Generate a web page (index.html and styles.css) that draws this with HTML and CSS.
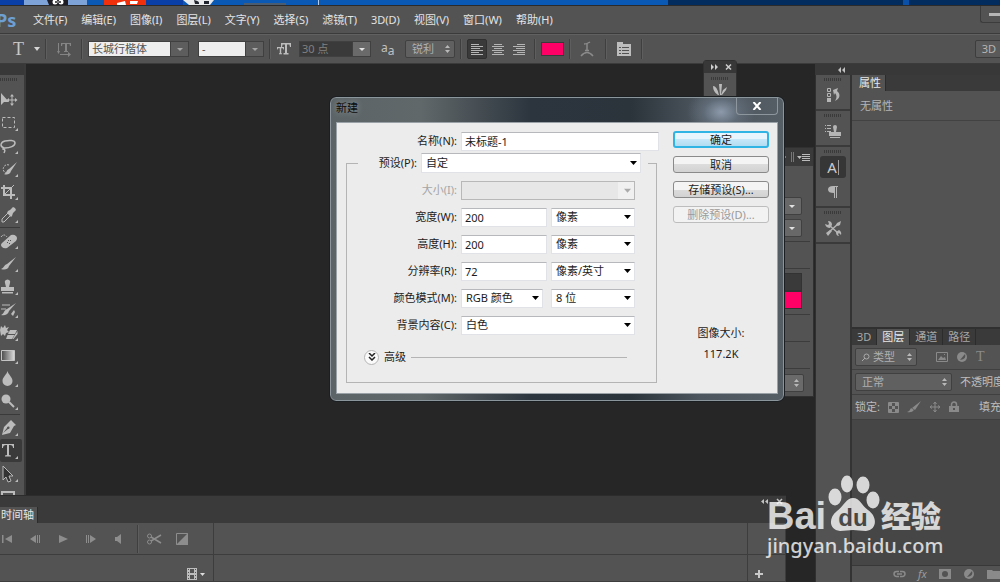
FILE: index.html
```html
<!DOCTYPE html>
<html lang="zh-CN">
<head>
  <meta charset="UTF-8">
  <meta name="viewport" content="width=device-width, initial-scale=1.0">
  <title>新建</title>
  <link rel="stylesheet" href="styles.css">
</head>
<body>
  <div class="app">
    <div class="desktop">
      <svg width="1000" height="5" viewBox="0 0 1000 5">
        <path fill="#0a3fa8" d="M0 0h24v5H0zM146 0h37v5h-37z"/>
        <path fill="#7da3d8" d="M24 0h63v5H24z"/>
        <path fill="#1d1c24" d="M47 0h21v5H49z"/>
        <circle cx="55" cy="2" r="2.500" fill="#fff"/>
        <circle cx="61" cy="2" r="2.500" fill="#fff"/>
        <circle cx="56" cy="2" r="1" fill="#222"/>
        <circle cx="60" cy="2" r="1" fill="#222"/>
        <path fill="#f0300c" d="M104 0h42v5h-42z"/>
        <path fill="#fff" d="M117 3l8-2 1 4h-9zM130 1h8l-1 3h-7z"/>
        <path fill="#e8eaec" d="M183 0h31l-4 5h-21z"/>
        <path fill="#20242c" d="M194 0q6 1 5 4h-4zM204 1h5v3h-5z"/>
        <path fill="#4b5b70" d="M244 3h42v2h-42z"/>
        <path fill="#b8cbe4" d="M318 0h1v5h-1z"/>
        <path fill="#032c5e" d="M668 0h332v5H668z"/>
        <path fill="#0b50a8" d="M903 0h6v5h-6z"/>
      </svg>
    </div>

    <header class="menubar">
      <span class="logo">Ps</span>
      <nav class="menus">
        <a href="#">文件(F)</a>
        <a href="#">编辑(E)</a>
        <a href="#">图像(I)</a>
        <a href="#">图层(L)</a>
        <a href="#">文字(Y)</a>
        <a href="#">选择(S)</a>
        <a href="#">滤镜(T)</a>
        <a href="#">3D(D)</a>
        <a href="#">视图(V)</a>
        <a href="#">窗口(W)</a>
        <a href="#">帮助(H)</a>
      </nav>
      <button class="minimize" aria-label="最小化"><span></span></button>
    </header>

    <div class="options">
      <button class="tool-preset" aria-label="文字工具">T</button>
      <svg class="caret" width="6" height="4" viewBox="0 0 6 4"><path d="M0 0h6L3 4z"/></svg>
      <span class="sep"></span>
      <svg class="orient" width="16" height="16" viewBox="0 0 16 16"><path d="M5 2h10v3h-1l-.5-2H11v7h1v1H8v-1h1V3H6.500L6 5H5zM2 2h1v8h1l-1.500 3L1 10h1zM4 13h8v-2l3 2.500L12 16v-2H4z"/></svg>
      <span class="sep"></span>
      <div class="combo font-name">
        <input type="text" value="长城行楷体" aria-label="字体">
        <button aria-label="选择字体"><i class="tri"></i></button>
      </div>
      <div class="combo font-style">
        <input type="text" value="-" aria-label="字形">
        <button aria-label="选择字形"><i class="tri"></i></button>
      </div>
      <span class="sep"></span>
      <svg class="size-icon" width="16" height="14" viewBox="0 0 16 14"><path d="M5 1h10v4h-1l-.6-2.500H11V11h1.500v1.500h-5V11H9V2.500H6.600L6 5H5zM1 5h7v2.500h-.7L7 6.200H5.200v5H6v1H3v-1h.8v-5H2L1.700 7.500H1z"/></svg>
      <div class="combo dark font-size">
        <input type="text" value="30 点" aria-label="字号">
        <button aria-label="选择字号"><i class="tri"></i></button>
      </div>
      <span class="aa">a<sub>a</sub></span>
      <select class="dark-select sharp" aria-label="消除锯齿"><option>锐利</option></select>
      <span class="sep"></span>
      <div class="aligns">
        <button class="active" aria-label="左对齐"><svg width="14" height="14" viewBox="0 0 14 14"><path d="M1 1h8v1H1zM1 3h12v1H1zM1 5h9v1H1zM1 7h12v1H1zM1 9h8v1H1zM1 11h12v1H1z"/></svg></button>
        <button aria-label="居中对齐"><svg width="14" height="14" viewBox="0 0 14 14"><path d="M3 1h8v1H3zM1 3h12v1H1zM3 5h8v1H3zM1 7h12v1H1zM3 9h8v1H3zM1 11h12v1H1z"/></svg></button>
        <button aria-label="右对齐"><svg width="14" height="14" viewBox="0 0 14 14"><path d="M5 1h8v1H5zM1 3h12v1H1zM4 5h9v1H4zM1 7h12v1H1zM5 9h8v1H5zM1 11h12v1H1z"/></svg></button>
      </div>
      <span class="sep"></span>
      <button class="swatch" aria-label="文本颜色"></button>
      <span class="sep"></span>
      <svg class="warp" width="14" height="16" viewBox="0 0 14 16"><path d="M4 3q3 0 6-2M7 2v7M5 9.500h4M1 15q6-7 12 0" fill="none" stroke="#8b8b8b" stroke-width="1.500"/></svg>
      <span class="sep"></span>
      <svg class="panel-icon" width="16" height="16" viewBox="0 0 16 16"><path fill-rule="evenodd" d="M1 1h6v2h8v12H1zM3 6v1h2V6zm3 0v1h7V6zM3 9v1h2V9zm3 0v1h7V9zm-3 3v1h2v-1zm3 0v1h7v-1z"/></svg>
      <span class="sep"></span>
      <button class="mode-3d">3D</button>
    </div>

    <div class="workspace">
      <main class="stage">
        <div class="canvas-row">
          <aside class="tools">
            <div class="tools-head"></div>
            <i class="grip"></i>
            <button aria-label="移动"><svg viewBox="0 0 22 23"><path d="M1 5v12l3-3h5z"/><path d="M12 8v8M8 12h8" class="line"/><path d="M12 6l2 2.500h-4zM12 18l2-2.500h-4zM6.500 12L9 10v4zM17.500 12L15 10v4z"/></svg></button>
            <button aria-label="选框"><svg viewBox="0 0 22 23"><path class="line" stroke-dasharray="3 2" d="M2.500 6.500h12v10h-12z"/><path d="M18 17v3h-3z"/></svg></button>
            <button aria-label="套索"><svg viewBox="0 0 22 23"><path class="line lasso" d="M4 14c-5-2-3-6 1-7s10-1 10 2-5 5-10 5q-2-1-2 1 3 0 1 4"/><path d="M18 17v3h-3z"/></svg></button>
            <button aria-label="快速选择"><svg viewBox="0 0 22 23"><path class="line" stroke-dasharray="2 1" d="M9 8a4 4 0 1 0-3 8"/><path d="M17 5l-6 9-2-2zM9 12l2 2c-1 4-5 4-7 3 3-1 2-4 5-5zM18 17v3h-3z"/></svg></button>
            <button aria-label="裁剪"><svg viewBox="0 0 22 23"><path class="line thick" d="M4 5v10h11M1 8h10v11"/><path class="line" d="M4 15L14 5"/><path d="M18 17v3h-3z"/></svg></button>
            <button aria-label="吸管"><svg viewBox="0 0 22 23"><path class="line" d="M9 9l-7 7v3h2l7-7"/><path d="M8 8l2-1 3-3 2 1 1 2-3 3-1 3-1 1-4-4zM18 17v3h-3z"/></svg></button>
            <hr>
            <button aria-label="修复画笔"><svg viewBox="0 0 22 23"><path class="line" stroke-dasharray="2 1" d="M1 8q3-4 6 0"/><path fill-rule="evenodd" d="M2 14l9-8q3-1 5 1t0 5l-9 7q-3 1-5-1t0-4zm5-1v1h1v-1zm3-2v1h1v-1zm-1 3v1h1v-1zm-1-3v1h1v-1zM18 17v3h-3z"/></svg></button>
            <button aria-label="画笔"><svg viewBox="0 0 22 23"><path d="M16 5l-7 9-2-2zM7 12l2 2c-1 4-5 4-8 3 3-1 3-4 6-5zM18 17v3h-3z"/></svg></button>
            <button aria-label="图章"><svg viewBox="0 0 22 23"><path d="M6 12l-1-4q-1-3 2.500-3.500Q11 5 10 8l-1 4h5v4H1v-4zM2 17h11v1.500H2zM18 17v3h-3z"/></svg></button>
            <button aria-label="历史画笔"><svg viewBox="0 0 22 23"><path class="line" d="M2 7h8M6 11H1"/><path d="M16 5l-7 8-2-2zM7 11l2 2c-1 4-5 5-8 4 3-1 3-5 6-6zM11 16l3-4 1 2-2 4zM18 17v3h-3z"/></svg></button>
            <button aria-label="橡皮擦"><svg viewBox="0 0 22 23"><path d="M1 5l2 2 2-3 1 3 3-1-2 3 2 2-3 1-1 3-2-2-2 2-1-6zM10 9h7l-2 4H8zM7.500 14h7L12 18H6zM15.500 13l2-3v3l-4 5h-1z"/><path d="M18 17v3h-3z"/></svg></button>
            <button aria-label="渐变"><svg viewBox="0 0 22 23"><defs><linearGradient id="grad"><stop stop-color="#4a4a4a"/><stop offset="1" stop-color="#ddd"/></linearGradient></defs><path fill="url(#grad)" stroke="#c4c4c4" d="M1.500 6.500h13v10h-13z"/><path d="M18 17v3h-3z"/></svg></button>
            <button aria-label="模糊"><svg viewBox="0 0 22 23"><path d="M7.500 4c1 4 5 6 5 10a5 5 0 0 1-10 0c0-4 4-6 5-10zM18 17v3h-3z"/></svg></button>
            <button aria-label="减淡"><svg viewBox="0 0 22 23"><circle cx="6" cy="9" r="4.500"/><path class="line thick" d="M9 12l5 5"/><path d="M18 17v3h-3z"/></svg></button>
            <hr>
            <button aria-label="钢笔"><svg viewBox="0 0 22 23"><path fill-rule="evenodd" d="M11 4l5 5-2 1-4 7-8 2 2-8 5-5zM3 17l5-4a1.300 1.300 0 1 0-1-1zM18 17v3h-3z"/></svg></button>
            <button class="active" aria-label="文字"><svg viewBox="0 0 22 23"><path d="M2 5h12v4h-1q0-3-3-3H9v10l2 .5v1H5v-1l2-.5V6H6Q3 6 3 9H2zM18 17v3h-3z"/></svg></button>
            <button aria-label="路径选择"><svg viewBox="0 0 22 23"><path d="M3 4v14l3-3 2 5 3-1-2-5h4z" fill="#333" stroke="#b8b8b8"/><path d="M18 17v3h-3z"/></svg></button>
            <button aria-label="矩形"><svg viewBox="0 0 22 23"><path class="line thick" d="M2 7h12v9H2z"/></svg></button>
          </aside>
        </div>

        <section class="timeline">
          <div class="timeline-head">
            <svg width="24" height="7" viewBox="0 0 24 7"><path fill="#c2c2c2" d="M4 1v5L1 3.500zM8 1v5L5 3.500z"/><path stroke="#c2c2c2" stroke-width="1.500" d="M17 1l5 5M22 1l-5 5"/></svg>
          </div>
          <div class="tabs"><button class="tab active">时间轴</button></div>
          <div class="timeline-grid">
            <div class="controls">
              <button aria-label="转到第一帧"><svg width="12" height="10" viewBox="0 0 12 10"><path d="M1 1h1.500v8H1zM11 1v8L4 5z"/></svg></button>
              <button aria-label="上一帧"><svg width="12" height="10" viewBox="0 0 12 10"><path d="M7 1v8L1 5zM8 1h1v8H8zM10 1h1v8h-1z"/></svg></button>
              <button aria-label="播放"><svg width="12" height="10" viewBox="0 0 12 10"><path d="M2 1l9 4-9 4z"/></svg></button>
              <button aria-label="下一帧"><svg width="12" height="10" viewBox="0 0 12 10"><path d="M1 1h1v8H1zM3 1h1v8H3zM5 1l6 4-6 4z"/></svg></button>
              <button aria-label="音频"><svg width="12" height="10" viewBox="0 0 12 10"><path d="M2 3h2l4-3v10L4 7H2z"/></svg></button>
              <span class="sep"></span>
              <button aria-label="拆分"><svg width="16" height="12" viewBox="0 0 16 12"><path fill="none" stroke="#8d8d8d" stroke-width="1.500" d="M5 4l10 6M5 8l10-6"/><circle cx="3.500" cy="3" r="2" fill="none" stroke="#8d8d8d"/><circle cx="3.500" cy="9" r="2" fill="none" stroke="#8d8d8d"/></svg></button>
              <button class="fade" aria-label="过渡"><svg width="12" height="12" viewBox="0 0 12 12"><path fill="none" stroke="#8d8d8d" d="M.5.500h11v11H.5z"/><path d="M12 0v12H0z"/></svg></button>
            </div>
            <div></div>
            <div></div>
            <div class="film">
              <svg width="18" height="12" viewBox="0 0 18 12"><path fill="#bdbdbd" fill-rule="evenodd" d="M0 0h10v12H0zM1 1v1h1V1zm0 3v1h1V4zm0 3v1h1V7zm0 3v1h1v-1zM8 1v1h1V1zm0 3v1h1V4zm0 3v1h1V7zm0 3v1h1v-1zM3 1v4h4V1zm0 6v4h4V7z"/><path fill="#ddd" d="M13 5h5l-2.500 3z"/></svg>
            </div>
            <div></div>
            <div class="add"><button aria-label="添加"><svg width="10" height="10" viewBox="0 0 10 10"><path fill="#c8c8c8" d="M4 1h2v3h3v2H6v3H4V6H1V4h3z"/></svg></button></div>
          </div>
        </section>

        <div class="brush-panel">
          <div class="brush-head"><svg width="22" height="8" viewBox="0 0 22 8"><path fill="#ccc" d="M1 1v6l3-3zM5 1v6l3-3z"/><path stroke="#ccc" stroke-width="1.500" d="M16 1.500l5 5M21 1.500l-5 5"/></svg></div>
          <i class="grip"></i>
          <svg width="18" height="16" viewBox="0 0 18 16"><path fill="#bbb" d="M2 3q4 0 6 9H7Q2 9 2 3zM8 1h3l-1 11H9zM16 4l-1 3-4 5h-1l2-5z"/></svg>
        </div>

        <section class="char-panel">
          <div class="char-head"><svg width="28" height="12" viewBox="0 0 28 12"><path fill="#bbb" d="M0 3l3 3-3 3z"/><path stroke="#777" d="M8.500 1v10M10.500 1v10"/><path fill="#bbb" d="M14 5h5l-2.500 3zM19 3h8v1h-8zM19 5h8v1h-8zM19 7h8v1h-8zM19 9h8v1h-8z"/></svg></div>
          <div class="char-group first">
            <button class="drop" aria-label="行距"><i class="tri"></i></button>
            <button class="drop" aria-label="字距"><i class="tri"></i></button>
          </div>
          <div class="char-group blank"></div>
          <div class="char-group colors"><span></span><span class="pink"></span></div>
          <div class="char-group small"></div>
          <div class="char-group small"></div>
          <div class="char-group last"><select class="dark-select" aria-label="语言"><option></option></select></div>
        </section>

        <section class="dialog" role="dialog" aria-labelledby="dialog-title">
          <div class="dialog-title">
            <h1 id="dialog-title">新建</h1>
            <button class="close" aria-label="关闭"><svg width="10" height="8" viewBox="0 0 10 8"><path stroke="#fff" stroke-width="2" d="M1.500 0l7 8M8.500 0l-7 8"/></svg></button>
          </div>
          <form class="dialog-body">
            <div class="fields">
              <div class="row name-row">
                <label for="name">名称(N):</label>
                <input id="name" type="text" value="未标题-1">
              </div>
              <fieldset>
                <legend>
                  <label for="preset">预设(P):</label>
                  <select id="preset"><option>自定</option></select>
                </legend>
                <div class="row">
                  <label for="size" class="disabled">大小(I):</label>
                  <select id="size" class="wide" disabled><option></option></select>
                </div>
                <div class="row">
                  <label for="width">宽度(W):</label>
                  <input id="width" type="text" value="200">
                  <select aria-label="宽度单位"><option>像素</option></select>
                </div>
                <div class="row">
                  <label for="height">高度(H):</label>
                  <input id="height" type="text" value="200">
                  <select aria-label="高度单位"><option>像素</option></select>
                </div>
                <div class="row">
                  <label for="res">分辨率(R):</label>
                  <input id="res" type="text" value="72">
                  <select aria-label="分辨率单位"><option>像素/英寸</option></select>
                </div>
                <div class="row">
                  <label for="mode">颜色模式(M):</label>
                  <select id="mode" class="mode"><option>RGB 颜色</option></select>
                  <select aria-label="位深度"><option>8 位</option></select>
                </div>
                <div class="row">
                  <label for="bg">背景内容(C):</label>
                  <select id="bg" class="wide"><option>白色</option></select>
                </div>
                <div class="advanced">
                  <button type="button" aria-label="展开高级"><svg width="8" height="8" viewBox="0 0 8 8"><path fill="none" stroke="#222" stroke-width="1.500" d="M1 0l3 3 3-3M1 4l3 3 3-3"/></svg></button>
                  <span>高级</span>
                  <i></i>
                </div>
              </fieldset>
            </div>
            <div class="actions">
              <button type="button" class="default">确定</button>
              <button type="button">取消</button>
              <button type="button">存储预设(S)...</button>
              <button type="button" disabled>删除预设(D)...</button>
              <p>图像大小:</p>
              <p>117.2K</p>
            </div>
          </form>
        </section>
      </main>

      <aside class="side">
        <div class="side-head"><svg width="8" height="6" viewBox="0 0 8 6"><path fill="#c2c2c2" d="M4 0v6L1 3zM8 0v6L5 3z"/></svg></div>
        <div class="side-body">
          <div class="dock">
            <div class="dock-group">
              <i class="grip"></i>
              <button aria-label="历史记录"><svg width="16" height="18" viewBox="0 0 16 18"><path fill="none" stroke="#b5b5b5" d="M2.500 2.500h3v3h-3zM2.500 7.500h3v3h-3z"/><path fill="#b5b5b5" d="M2 12h4v4H2zM8 4l5-2-1 3c4 3 3 8-2 10 2-3 2-6 0-8l-1 2z"/></svg></button>
            </div>
            <div class="dock-group">
              <i class="grip"></i>
              <button aria-label="仿制源"><svg width="18" height="16" viewBox="0 0 18 16"><path fill="#b5b5b5" d="M1 2h1v1H1zM3 2h4v1H3zM1 5h1v1H1zM3 5h4v1H3zM1 8h1v1H1zM3 8h4v1H3zM10 9L9 4q0-2 2-2t2 2l-1 5h5v4H5V9zM6 14h10v1H6z"/></svg></button>
            </div>
            <div class="dock-group tall">
              <i class="grip"></i>
              <button class="active" aria-label="字符"><span>A</span></button>
              <button aria-label="段落"><svg width="12" height="14" viewBox="0 0 12 14"><path fill="#b5b5b5" d="M11 1v1h-1v11H9V2H8v11H7V8Q1 8 1 4.500T6 1z"/></svg></button>
            </div>
            <div class="dock-group">
              <i class="grip"></i>
              <button aria-label="工具预设"><svg width="18" height="18" viewBox="0 0 18 18"><path fill="none" stroke="#b5b5b5" stroke-width="1.500" d="M5 6l9 8M14 5L5 13"/><path fill="#b5b5b5" d="M1 5l3 1 1-1-1-3q4 0 4 4L6 9Q2 9 1 5zM12 6l1-2 4-2-1 4-2 1zM2 14l4-3 2 1-4 5zM12 13l3-2q3 2 2 5l-2-2-1 1 1 2q-3 0-3-4z"/></svg></button>
            </div>
          </div>

          <div class="panels">
            <section class="props">
              <div class="tabs"><button class="tab active">属性</button></div>
              <p>无属性</p>
            </section>
            <section class="layers">
              <div class="tabs">
                <button class="tab">3D</button>
                <button class="tab active">图层</button>
                <button class="tab">通道</button>
                <button class="tab">路径</button>
              </div>
              <div class="layer-row filter">
                <select class="dark-select kind" aria-label="过滤类型"><option>类型</option></select>
                <svg width="12" height="12" viewBox="0 0 12 12"><path fill="none" stroke="#8a8a8a" d="M.5 1.500h11v9H.5z"/><path fill="#8a8a8a" d="M2 9l3-4 2 2 2-1 1 3zM8 3h1v1H8z"/></svg>
                <svg width="12" height="12" viewBox="0 0 12 12"><circle cx="6" cy="6" r="5" fill="#8a8a8a"/><path fill="#535353" d="M9 3q2 5-5 6z"/></svg>
                <span class="serif-t">T</span>
              </div>
              <div class="layer-row">
                <select class="dark-select blend" aria-label="混合模式"><option>正常</option></select>
                <span>不透明度:</span>
              </div>
              <div class="layer-row lock">
                <span>锁定:</span>
                <svg width="11" height="11" viewBox="0 0 11 11"><path fill="none" stroke="#8a8a8a" d="M.5.500h10v10H.5z"/><path fill="#8a8a8a" d="M1 1h3v3H1zM7 1h3v3H7zM4 4h3v3H4zM1 7h3v3H1zM7 7h3v3H7z"/></svg>
                <svg width="14" height="12" viewBox="0 0 14 12"><path fill="#8a8a8a" d="M14 0L8 9 5 7zM4 7l3 2q-2 3-7 2 3-1 4-4z"/></svg>
                <svg width="12" height="12" viewBox="0 0 12 12"><path fill="none" stroke="#8a8a8a" d="M6 1v10M1 6h10M4.500 3L6 1l1.500 2M4.500 9L6 11l1.500-2M3 4.500L1 6l2 1.500M9 4.500L11 6 9 7.500"/></svg>
                <svg width="10" height="12" viewBox="0 0 10 12"><path fill="none" stroke="#8a8a8a" stroke-width="1.500" d="M2.500 6V3.500a2.500 2.500 0 0 1 5 0V6"/><path fill="#8a8a8a" fill-rule="evenodd" d="M0 5h10v6H0zm4 2v2h2V7z"/></svg>
                <span class="fill-label">填充:</span>
              </div>
              <div class="layer-list"></div>
              <div class="layer-foot">
                <svg width="13" height="8" viewBox="0 0 13 8"><path fill="none" stroke="#8a8a8a" stroke-width="1.500" d="M6 1.500H3.500a2.500 2.500 0 0 0 0 5H6M7 1.500h2.500a2.500 2.500 0 0 1 0 5H7M4 4h5"/></svg>
                <em>fx</em>
                <svg width="12" height="10" viewBox="0 0 12 10"><path fill="#8a8a8a" fill-rule="evenodd" d="M0 0h12v10H0zm6 2a3 3 0 1 0 0 6 3 3 0 0 0 0-6z"/></svg>
                <svg width="12" height="12" viewBox="0 0 12 12"><circle cx="6" cy="6" r="5" fill="#8a8a8a"/><path fill="#535353" d="M9 3q2 5-5 6z"/></svg>
                <svg width="13" height="10" viewBox="0 0 13 10"><path fill="#8a8a8a" d="M0 1h5l1 1h7v8H0z"/></svg>
              </div>
            </section>
          </div>
        </div>
      </aside>
    </div>

    <div class="watermark">
      <div class="brand">
        <span class="bai">Bai</span>
        <svg width="52" height="56" viewBox="0 0 52 56">
          <g fill="#fff">
            <ellipse cx="7" cy="22" rx="6.500" ry="8.500"/>
            <ellipse cx="19" cy="9" rx="6" ry="8.500"/>
            <ellipse cx="35" cy="10" rx="6.500" ry="8.500"/>
            <ellipse cx="45" cy="25" rx="6.500" ry="8.500"/>
            <path d="M25 23c7 0 9 8 15 12 10 7 9 20-2 21-5 0-9-1-13-1s-8 1-13 1C1 55 0 43 9 36c7-5 9-13 16-13z"/>
          </g>
          <text x="25" y="51" text-anchor="middle" class="du">du</text>
        </svg>
        <span class="jy">经验</span>
      </div>
      <div class="site">jingyan.baidu.com</div>
    </div>
  </div>
</body>
</html>
```
FILE: styles.css
```css
* {
  box-sizing: border-box;
}

body {
  margin: 0;
  font-family: "Noto Sans", "Noto Sans CJK SC", sans-serif;
  font-size: 11px;
  line-height: 16px;
  color: #d6d6d6;
  background-color: #262626;
}

button,
input,
select {
  font: inherit;
  color: inherit;
  margin: 0;
  padding: 0;
  border: none;
  background: none;
}

select {
  appearance: none;
}

svg {
  display: block;
  flex: none;
}

.app {
  position: relative;
  display: flex;
  flex-direction: column;
  height: 100vh;
  overflow: hidden;
}

.desktop {
  flex: none;
  height: 5px;
  overflow: hidden;
  background-color: #0a5ab5;
}

/* menu bar */
.menubar {
  flex: none;
  display: flex;
  align-items: center;
  height: 29px;
  overflow: hidden;
  background-color: #535353;
  border-top: 1px solid #2b2b2b;
  border-bottom: 1px solid #3b3b3b;
}

.logo {
  flex: none;
  width: 33px;
  margin-left: -4px;
  font-family: "Open Sans", sans-serif;
  font-size: 18px;
  font-weight: bold;
  color: #6d9fd2;
}

.menus {
  display: flex;
  gap: 14px;
  margin-left: 4px;
  white-space: nowrap;
}

.menus a {
  color: #e4e4e4;
  text-decoration: none;
}

.minimize {
  align-self: flex-start;
  width: 20px;
  height: 17px;
  margin-left: auto;
  padding-left: 8px;
  border: 1px solid #3c3c3c;
  border-top: none;
  border-right: none;
  border-radius: 0 0 0 3px;
}

.minimize span {
  display: block;
  height: 3px;
  background-color: #b5b5b5;
}

/* options bar */
.options {
  flex: none;
  display: flex;
  align-items: center;
  height: 30px;
  overflow: hidden;
  background-color: #535353;
  border-top: 1px solid #616161;
  border-bottom: 1px solid #3b3b3b;
}

.sep {
  flex: none;
  width: 2px;
  height: 20px;
  margin: 0 5px;
  background-color: #3f3f3f;
  border-right: 1px solid #5e5e5e;
}

.tool-preset {
  width: 13px;
  margin: 0 9px 0 12px;
  font-family: "Liberation Serif", serif;
  font-size: 18px;
  color: #c8c8c8;
}

.caret {
  fill: #d6d6d6;
}

.orient {
  margin: 0 4px;
  fill: #858585;
}

.size-icon,
.panel-icon {
  fill: #bdbdbd;
}

.panel-icon {
  margin: 0 4px;
}

.combo {
  display: flex;
  height: 16px;
  border: 1px solid #404040;
}

.combo input {
  min-width: 0;
  flex: 1;
  padding-left: 3px;
  color: #555;
  background-color: #eee;
}

.combo button {
  display: flex;
  align-items: center;
  justify-content: center;
  width: 18px;
  border-left: 1px solid #404040;
  background-color: #5d5d5d;
}

.combo.dark input {
  padding-left: 2px;
  color: #808080;
  background-color: #3a3a3a;
}

.combo.dark button {
  background-color: #6a6a6a;
}

.tri {
  display: block;
  border: 3px solid transparent;
  border-top-color: #a5a5a5;
  border-bottom: none;
}

.dark .tri,
.drop .tri {
  border-top-color: #e2e2e2;
}

.font-name {
  width: 101px;
}

.font-style {
  width: 66px;
  margin-left: 9px;
}

.font-size {
  width: 72px;
  margin-left: 7px;
}

.aa {
  width: 14px;
  margin: 0 10px;
  font-size: 12px;
  line-height: 12px;
  color: #c0c0c0;
}

.aa sub {
  font-size: 12px;
  line-height: 8px;
}

.dark-select {
  flex: none;
  height: 18px;
  padding: 0 6px;
  color: #b0b0b0;
  border: 1px solid #404040;
  border-radius: 2px;
  background: #606060 url("data:image/svg+xml,%3Csvg xmlns='http://www.w3.org/2000/svg' width='5' height='8'%3E%3Cpath fill='%23b8b8b8' d='M0 3h5L2.500 0zM0 5h5L2.500 8z'/%3E%3C/svg%3E") no-repeat right 4px center;
}

.sharp {
  width: 50px;
}

.aligns {
  display: flex;
  gap: 1px;
}

.aligns button {
  width: 20px;
  height: 20px;
  padding: 1px 2px 0;
  border: 1px solid transparent;
  border-radius: 2px;
}

.aligns .active {
  background-color: #3a3a3a;
  border-color: #303030;
}

.aligns svg {
  fill: #b5b5b5;
}

.swatch {
  width: 23px;
  height: 14px;
  background-color: #ff0066;
  border: 1px solid #3a3a3a;
}

.warp {
  margin: 0 6px 0 4px;
}

.mode-3d {
  width: 28px;
  height: 18px;
  margin-left: auto;
  margin-right: -3px;
  color: #b5b5b5;
  border: 1px solid #3d3d3d;
  border-radius: 2px;
  background-color: #5a5a5a;
}

/* work area */
.workspace {
  flex: 1;
  display: flex;
  min-height: 0;
}

.stage {
  position: relative;
  flex: 1;
  display: flex;
  flex-direction: column;
  min-width: 0;
}

.canvas-row {
  flex: 1;
  display: flex;
  min-height: 0;
  overflow: hidden;
}

.grip {
  display: block;
  flex: none;
  width: 18px;
  height: 3px;
  margin: 4px auto 3px;
  background: repeating-linear-gradient(90deg, #3a3a3a 0 1px, #535353 1px 2px);
}

.tools {
  width: 26px;
  background-color: #535353;
  border-right: 2px solid #3a3a3a;
}

.tools-head {
  height: 11px;
  background-color: #383838;
}

.tools .grip {
  margin: 3px 0 7px;
}

.tools button {
  display: block;
  width: 22px;
  height: 23px;
  border-radius: 2px;
}

.tools button.active {
  background-color: #3a3a3a;
}

.tools svg {
  width: 22px;
  height: 23px;
  fill: #bcbcbc;
}

.tools .line {
  fill: none;
  stroke: #bcbcbc;
}

.tools .lasso {
  stroke-width: 1.5;
}

.tools .thick {
  stroke-width: 2;
}

.tools hr {
  height: 1px;
  margin: 1px 4px 1px 0;
  border: none;
  background-color: #3a3a3a;
}

/* tabs */
.tabs {
  display: flex;
  flex: none;
  height: 16px;
  background-color: #3a3a3a;
}

.tab {
  padding: 0 5px;
  color: #a8a8a8;
  border-right: 1px solid #2c2c2c;
}

.tab.active {
  color: #e8e8e8;
  background-color: #535353;
}

.props .tab {
  padding: 0 4px 0 7px;
}

/* timeline */
.timeline {
  flex: none;
  margin-right: 29px;
  background-color: #535353;
  border-top: 1px solid #2c2c2c;
}

.timeline-head {
  display: flex;
  justify-content: flex-end;
  height: 11px;
  padding: 2px 2px 0 0;
  background-color: #3a3a3a;
}

.timeline .tab {
  padding: 0 3px 0 1px;
}

.timeline-grid {
  display: grid;
  grid-template-columns: 214px 1fr 38px;
  grid-template-rows: 32px 27px;
}

.timeline-grid > div {
  border-right: 1px solid #3d3d3d;
  border-bottom: 1px solid #3d3d3d;
}

.controls {
  display: flex;
  align-items: center;
  gap: 16px;
  padding-left: 1px;
}

.controls .sep {
  height: 28px;
  margin: 0 -9px 0 -4px;
}

.controls .fade {
  margin-left: -2px;
}

.controls svg {
  fill: #8d8d8d;
}

.film {
  display: flex;
  justify-content: flex-end;
  align-items: center;
  padding: 12px 8px 0 0;
}

.add {
  display: flex;
  align-items: center;
  padding: 12px 0 0 6px;
}

/* floating panels */
.brush-panel {
  position: absolute;
  right: 78px;
  top: -4px;
  width: 34px;
  height: 50px;
  background-color: #535353;
  border: 1px solid #303030;
  border-radius: 3px 3px 0 0;
}

.brush-panel > svg {
  margin: 0 auto;
}

.brush-head {
  height: 12px;
  padding: 2px 0 0 6px;
  background-color: #383838;
}

.char-panel {
  position: absolute;
  right: 1px;
  top: 83px;
  width: 130px;
  background-color: #535353;
  border: 1px solid #303030;
}

.char-head {
  display: flex;
  justify-content: flex-end;
  height: 18px;
  padding: 3px 2px 0 0;
  background-color: #3a3a3a;
}

.char-group {
  margin-right: 3px;
  padding-right: 8px;
  border-bottom: 1px solid #3c3c3c;
}

.first {
  display: flex;
  flex-direction: column;
  align-items: flex-end;
  gap: 4px;
  height: 76px;
  padding-top: 31px;
}

.drop {
  display: flex;
  flex: none;
  align-items: center;
  justify-content: center;
  width: 20px;
  height: 18px;
  border: 1px solid #404040;
  border-radius: 2px;
  background-color: #686868;
}

.blank {
  height: 27px;
}

.colors {
  height: 46px;
  padding-top: 4px;
}

.colors span {
  display: block;
  height: 18px;
  background-color: #3a3a3a;
  border: 1px solid #333;
}

.colors .pink {
  background-color: #ff0066;
}

.small {
  height: 27px;
}

.last {
  height: 27px;
  padding: 5px 6px 0 0;
  border: none;
}

.last select {
  width: 100%;
  background-color: #6a6a6a;
}

/* new document dialog */
.dialog {
  position: absolute;
  right: 31px;
  top: 33px;
  width: 454px;
  padding: 0 5px 6px;
  color: #1c1c1c;
  border: 1px solid #8b959c;
  border-radius: 6px;
  outline: 1px solid #1b1f22;
  background:
    radial-gradient(ellipse at 390px 14px, #8d9aaa 0, rgba(110, 124, 140, 0.5) 18px, transparent 34px),
    linear-gradient(90deg, #5c6467 0, #61686a 90px, #2c353e 200px, #2b333b 300px, #4d565e 370px, #555d65 100%);
}

.dialog-title {
  display: flex;
  justify-content: space-between;
  height: 24px;
}

.dialog-title h1 {
  margin: 2px 0 0;
  font-size: 11px;
  font-weight: normal;
  color: #0c0c0c;
  text-shadow: 0 0 6px #9da5a8;
}

.close {
  display: flex;
  align-items: center;
  justify-content: center;
  width: 42px;
  height: 17px;
  border: 1px solid #8e969d;
  border-top: none;
  border-radius: 0 0 4px 4px;
}

.dialog-body {
  display: flex;
  gap: 16px;
  padding: 8px 9px 10px;
  background-color: #ececec;
  border: 1px solid #9aa2a8;
}

.fields {
  flex: 1;
}

.dialog input,
.dialog select {
  height: 19px;
  padding: 0 4px;
  background-color: #fff;
  border: 1px solid #e0e2e8;
  border-top-color: #b6b8bc;
}

.dialog input {
  padding: 0 3px;
}

.dialog select {
  background-image: url("data:image/svg+xml,%3Csvg xmlns='http://www.w3.org/2000/svg' width='7' height='4'%3E%3Cpath d='M0 0h7L3.500 4z'/%3E%3C/svg%3E");
  background-repeat: no-repeat;
  background-position: right 3px center;
}

.row {
  display: flex;
  align-items: center;
  gap: 4px;
  height: 20px;
}

.row label {
  flex: none;
  width: 99px;
  text-align: right;
}

.row input {
  flex: none;
  width: 86px;
}

.row select {
  flex: none;
  width: 84px;
}

.name-row label {
  width: 111px;
}

.dialog .name-row input {
  flex: 1;
  margin-right: -2px;
}

.row .mode {
  width: 82px;
  margin-right: 4px;
}

.row .wide {
  width: 174px;
}

fieldset {
  min-width: 0;
  height: 230px;
  margin: 2px 0 0;
  padding: 0 8px 0 11px;
  border: 1px solid #b4b4b4;
}

legend {
  display: flex;
  align-items: center;
  gap: 4px;
  width: 290px;
  padding: 0;
}

legend label {
  width: 59px;
  text-align: right;
}

.dialog legend select {
  width: 220px;
  height: 20px;
}

fieldset .row {
  margin-top: 7px;
}

.disabled {
  color: #a5a5a5;
}

.dialog select:disabled {
  opacity: 1;
  border-color: #b8b8b8;
  background-color: #e7e7e7;
  background-image: url("data:image/svg+xml,%3Csvg xmlns='http://www.w3.org/2000/svg' width='16' height='18'%3E%3Cpath fill='%23f0f0f0' d='M0 0h16v18H0z'/%3E%3Cpath fill='%23aaa' d='M6 7h7l-3.500 4z'/%3E%3C/svg%3E");
  background-position: right center;
}

.advanced {
  display: flex;
  align-items: center;
  gap: 5px;
  margin: 14px 21px 0 6px;
}

.advanced button {
  display: flex;
  align-items: center;
  justify-content: center;
  width: 15px;
  height: 15px;
  border: 1px solid #b5b5b5;
  border-radius: 50%;
  background-color: #fafafa;
}

.advanced i {
  flex: 1;
  height: 1px;
  background-color: #b4b4b4;
}

.actions {
  flex: none;
  display: flex;
  flex-direction: column;
  gap: 8px;
  width: 96px;
}

.actions button {
  height: 17px;
  line-height: 14px;
  border: 1px solid #8a8a8a;
  border-radius: 3px;
  background: linear-gradient(#f4f4f4 50%, #dcdcdc 50%, #d2d2d2);
}

.actions .default {
  border: 2px solid #2fb4e4;
  line-height: 12px;
  background: linear-gradient(#e8f5fc 50%, #c6e7f8 50%, #b2dcf2);
}

.actions button:disabled {
  color: #9a9a9a;
  border-color: #bdbdbd;
  background: #f2f2f2;
}

.actions p {
  margin: 0;
  line-height: 13px;
  text-align: center;
}

.actions button + p {
  margin-top: 95px;
}

/* right side */
.side {
  flex: none;
  display: flex;
  flex-direction: column;
  width: 185px;
  background-color: #535353;
}

.side-head {
  flex: none;
  height: 11px;
  padding: 3px 0 0 22px;
  background-color: #383838;
}

.side-body {
  flex: 1;
  display: flex;
  min-height: 0;
}

.dock {
  flex: none;
  width: 37px;
  border-left: 1px solid #303030;
  border-right: 2px solid #333;
}

.dock-group {
  height: 36px;
  padding-top: 3px;
  border-bottom: 2px solid #3a3a3a;
}

.dock-group.tall {
  height: 61px;
}

.dock-group .grip {
  margin: 0 auto 3px;
}

.dock-group button {
  display: flex;
  align-items: center;
  justify-content: center;
  width: 26px;
  height: 22px;
  margin: 0 auto 3px;
  border-radius: 3px;
}

.dock-group .active {
  background-color: #363636;
}

.dock-group .active span {
  padding-right: 1px;
  font-size: 15px;
  line-height: 15px;
  color: #cacaca;
  border-right: 1px solid #a0a0a0;
}

.panels {
  flex: 1;
  display: flex;
  flex-direction: column;
  min-width: 0;
  overflow: hidden;
}

.props {
  height: 254px;
  border-bottom: 2px solid #303030;
}

.props p {
  margin: 0;
  padding: 7px 8px 6px;
  color: #b5b5b5;
  border-bottom: 1px solid #424242;
}

.layers {
  flex: 1;
  display: flex;
  flex-direction: column;
  white-space: nowrap;
}

.layer-row {
  flex: none;
  display: flex;
  align-items: center;
  gap: 8px;
  height: 25px;
  padding-left: 3px;
  color: #bdbdbd;
  border-bottom: 1px solid #404040;
}

.layer-row span {
  flex: none;
}

.kind {
  width: 62px;
  margin-right: 11px;
  padding-left: 17px;
  background-image:
    url("data:image/svg+xml,%3Csvg xmlns='http://www.w3.org/2000/svg' width='5' height='8'%3E%3Cpath fill='%23b8b8b8' d='M0 3h5L2.500 0zM0 5h5L2.500 8z'/%3E%3C/svg%3E"),
    url("data:image/svg+xml,%3Csvg xmlns='http://www.w3.org/2000/svg' width='9' height='9'%3E%3Ccircle cx='5.500' cy='3.500' r='2.500' fill='none' stroke='%23aaa'/%3E%3Cpath stroke='%23aaa' d='M4 5L1 8'/%3E%3C/svg%3E");
  background-position: right 4px center, left 5px center;
}

.serif-t {
  font-family: "Liberation Serif", serif;
  font-size: 14px;
  color: #8a8a8a;
}

.blend {
  width: 97px;
}

.lock {
  gap: 8px;
}

.fill-label {
  margin-left: 12px;
}

.layer-list {
  flex: 1;
  background-color: #464646;
}

.layer-foot {
  flex: none;
  display: flex;
  align-items: center;
  gap: 12px;
  height: 17px;
  padding-left: 41px;
  color: #9a9a9a;
  border-top: 1px solid #383838;
}

/* watermark */
.watermark {
  position: absolute;
  right: 56px;
  bottom: 21px;
  width: 177px;
  color: #fff;
  opacity: 0.78;
}

.brand {
  display: flex;
  align-items: flex-end;
  height: 56px;
}

.bai {
  width: 61px;
  font-family: "Liberation Sans", sans-serif;
  font-size: 38px;
  font-weight: bold;
  line-height: 30px;
}

.du {
  font-family: "Liberation Sans", sans-serif;
  font-size: 24px;
  font-weight: bold;
  fill: #484848;
}

.jy {
  margin-left: 1px;
  font-family: "Noto Sans CJK SC", sans-serif;
  font-size: 30px;
  font-weight: 900;
  line-height: 34px;
}

.site {
  font-size: 20px;
  font-weight: 500;
  line-height: 30px;
}
```
